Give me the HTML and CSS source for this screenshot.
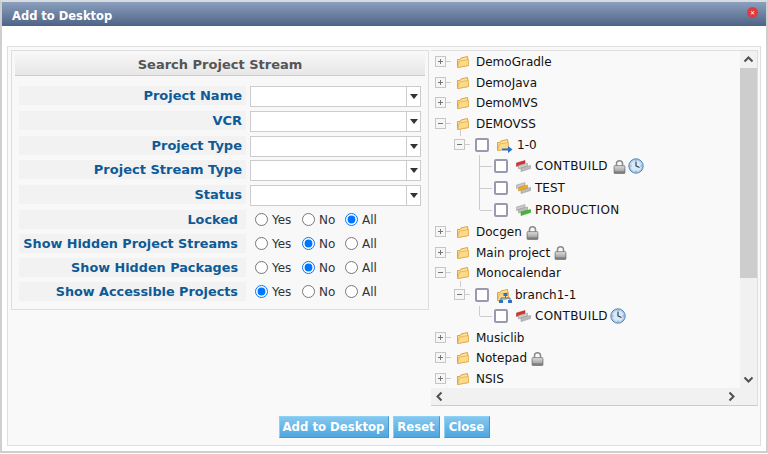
FILE: index.html
```html
<html>
<head>
    <title>Add to Desktop</title>
    <link rel="stylesheet" href="styles.css">
</head>

<body>
    <svg class="defs" width="0" height="0">
        <defs>
            <linearGradient id="folderFill" x1="0" y1="0" x2="0" y2="1">
                <stop offset="0" stop-color="#ffe7a8" />
                <stop offset="1" stop-color="#f7c564" />
            </linearGradient>
            <linearGradient id="lockFill" x1="0" y1="0" x2="0" y2="1">
                <stop offset="0" stop-color="#d8d8d8" />
                <stop offset="1" stop-color="#6f7072" />
            </linearGradient>
            <symbol id="folder" viewBox="0 0 14 14">
                <path d="M1.5 12.5 L1.5 4.5 L4 4.5 L5 3 L11.5 1.5 L12.5 10.5 Z" fill="url(#folderFill)" stroke="#d9a441" />
                <path d="M1.5 12.5 L3.5 6 L12.5 4.5 L12.5 10.5 Z" fill="#fdd98a" stroke="#e0ae50" stroke-width=".7" />
            </symbol>
            <symbol id="plus" viewBox="0 0 21 12">
                <rect x=".5" y=".5" width="10" height="10" fill="#f6f6f6" stroke="#c6c6c6" />
                <path d="M3 5.5 H8 M5.5 3 V8" stroke="#777" />
                <path d="M11 5.5 H16" stroke="#ccc" />
            </symbol>
            <symbol id="minus" viewBox="0 0 21 12">
                <rect x=".5" y=".5" width="10" height="10" fill="#f6f6f6" stroke="#c6c6c6" />
                <path d="M3 5.5 H8" stroke="#777" />
                <path d="M11 5.5 H16" stroke="#ccc" />
            </symbol>
            <symbol id="streamRed" viewBox="0 0 15 12">
                <path d="M.5 6.5 V3 L9 .5 V3.5 Z" fill="#d8322e" stroke="#a82522" stroke-width=".5" />
                <path d="M2.5 9 V5.5 L11.5 3 V6 Z" fill="#c9c9c9" stroke="#929292" stroke-width=".5" />
                <path d="M5 11.5 V8 L14.5 5.5 V8.5 Z" fill="#bdbdbd" stroke="#8c8c8c" stroke-width=".5" />
            </symbol>
            <symbol id="streamAmber" viewBox="0 0 15 12">
                <path d="M.5 6.5 V3 L9 .5 V3.5 Z" fill="#c9c9c9" stroke="#929292" stroke-width=".5" />
                <path d="M2.5 9 V5.5 L11.5 3 V6 Z" fill="#f5a91c" stroke="#c98a12" stroke-width=".5" />
                <path d="M5 11.5 V8 L14.5 5.5 V8.5 Z" fill="#bdbdbd" stroke="#8c8c8c" stroke-width=".5" />
            </symbol>
            <symbol id="streamGreen" viewBox="0 0 15 12">
                <path d="M.5 6.5 V3 L9 .5 V3.5 Z" fill="#c9c9c9" stroke="#929292" stroke-width=".5" />
                <path d="M2.5 9 V5.5 L11.5 3 V6 Z" fill="#bdbdbd" stroke="#8c8c8c" stroke-width=".5" />
                <path d="M5 11.5 V8 L14.5 5.5 V8.5 Z" fill="#3fbb38" stroke="#2c8f28" stroke-width=".5" />
            </symbol>
            <symbol id="lock" viewBox="0 0 13 15">
                <path d="M3.5 7 V4.5 C3.5 .8 9.5 .8 9.5 4.5 V7" fill="none" stroke="#8a8a8a" stroke-width="1.5" />
                <rect x="1" y="6.5" width="11" height="8" rx="1" fill="url(#lockFill)" stroke="#666" stroke-width=".6" />
                <path d="M2 9 H11 M2 11 H11" stroke="#eee" stroke-width=".5" />
            </symbol>
            <symbol id="clock" viewBox="0 0 16 16">
                <circle cx="8" cy="8" r="7.2" fill="#a9d0ee" stroke="#4f86b6" />
                <circle cx="8" cy="8" r="5.4" fill="#d6eaf8" />
                <path d="M8 3.8 V8 L11.5 9.5" fill="none" stroke="#234" stroke-width="1.1" />
                <path d="M8 2.6 V3.4 M8 12.6 V13.4 M2.6 8 H3.4 M12.6 8 H13.4" stroke="#d33" />
            </symbol>
        </defs>
    </svg>

    <div class="window">
        <div class="titleBar">
            <span>Add to Desktop</span>
            <span class="closeIcon">&#10005;</span>
        </div>

        <div class="windowBody">
            <div class="panel">
                <div class="columns">
                    <form class="searchForm">
                        <div class="searchTitle">Search Project Stream</div>

                        <div class="formRow">
                            <label class="fieldLabel">Project Name</label>
                            <div class="combo"><span class="comboArrow"></span></div>
                        </div>
                        <div class="formRow">
                            <label class="fieldLabel">VCR</label>
                            <div class="combo"><span class="comboArrow"></span></div>
                        </div>
                        <div class="formRow">
                            <label class="fieldLabel">Project Type</label>
                            <div class="combo"><span class="comboArrow"></span></div>
                        </div>
                        <div class="formRow">
                            <label class="fieldLabel">Project Stream Type</label>
                            <div class="combo"><span class="comboArrow"></span></div>
                        </div>
                        <div class="formRow">
                            <label class="fieldLabel">Status</label>
                            <div class="combo"><span class="comboArrow"></span></div>
                        </div>

                        <div class="formRow radioRow">
                            <label class="fieldLabel">Locked</label>
                            <div class="radios">
                                <label class="yes"><input type="radio" name="locked">Yes</label>
                                <label class="no"><input type="radio" name="locked">No</label>
                                <label><input type="radio" name="locked" checked>All</label>
                            </div>
                        </div>
                        <div class="formRow radioRow">
                            <label class="fieldLabel">Show Hidden Project Streams</label>
                            <div class="radios">
                                <label class="yes"><input type="radio" name="streams">Yes</label>
                                <label class="no"><input type="radio" name="streams" checked>No</label>
                                <label><input type="radio" name="streams">All</label>
                            </div>
                        </div>
                        <div class="formRow radioRow">
                            <label class="fieldLabel">Show Hidden Packages</label>
                            <div class="radios">
                                <label class="yes"><input type="radio" name="packages">Yes</label>
                                <label class="no"><input type="radio" name="packages" checked>No</label>
                                <label><input type="radio" name="packages">All</label>
                            </div>
                        </div>
                        <div class="formRow radioRow">
                            <label class="fieldLabel">Show Accessible Projects</label>
                            <div class="radios">
                                <label class="yes"><input type="radio" name="accessible" checked>Yes</label>
                                <label class="no"><input type="radio" name="accessible">No</label>
                                <label><input type="radio" name="accessible">All</label>
                            </div>
                        </div>
                    </form>

                    <div class="treeBox">
                        <div class="tree">
                            <div class="node"><svg class="toggle"><use href="#plus" /></svg><svg class="folder"><use href="#folder" /></svg>DemoGradle</div>
                            <div class="node"><svg class="toggle"><use href="#plus" /></svg><svg class="folder"><use href="#folder" /></svg>DemoJava</div>
                            <div class="node"><svg class="toggle"><use href="#plus" /></svg><svg class="folder"><use href="#folder" /></svg>DemoMVS</div>
                            <div class="node"><svg class="toggle"><use href="#minus" /></svg><svg class="folder"><use href="#folder" /></svg>DEMOVSS</div>

                            <div class="node branch">
                                <span class="stub"></span>
                                <svg class="toggle"><use href="#minus" /></svg><span class="check"></span>
                                <svg class="folder"><use href="#folder" /></svg>
                                <svg class="arrowBadge" viewBox="0 0 11 7"><path d="M0 2.5 H6 V0 L10.5 3.5 L6 7 V4.5 H0 Z" fill="#2f73c0" /></svg>
                                <span class="branchName">1-0</span>
                            </div>
                            <div class="node stream">
                                <span class="elbow"></span><span class="check"></span>
                                <svg class="streamIcon"><use href="#streamRed" /></svg>
                                <span class="upper">CONTBUILD</span><svg class="lock"><use href="#lock" /></svg><svg class="clock"><use href="#clock" /></svg>
                            </div>
                            <div class="node stream">
                                <span class="elbow"></span><span class="check"></span>
                                <svg class="streamIcon"><use href="#streamAmber" /></svg>
                                TEST
                            </div>
                            <div class="node stream tail">
                                <span class="elbow last"></span><span class="check"></span>
                                <svg class="streamIcon"><use href="#streamGreen" /></svg>
                                <span class="upper wider">PRODUCTION</span>
                            </div>

                            <div class="node"><svg class="toggle"><use href="#plus" /></svg><svg class="folder"><use href="#folder" /></svg>Docgen<svg class="lock"><use href="#lock" /></svg></div>
                            <div class="node"><svg class="toggle"><use href="#plus" /></svg><svg class="folder"><use href="#folder" /></svg>Main project<svg class="lock"><use href="#lock" /></svg></div>
                            <div class="node"><svg class="toggle"><use href="#minus" /></svg><svg class="folder"><use href="#folder" /></svg>Monocalendar</div>

                            <div class="node branch second">
                                <span class="stub"></span>
                                <svg class="toggle"><use href="#minus" /></svg><span class="check"></span>
                                <svg class="folder"><use href="#folder" /></svg>
                                <svg class="arrowBadge treeBadge" viewBox="0 0 13 10"><path d="M6.5 2 V5 M2 8 V5 H11 V8" fill="none" stroke="#2f73c0" /><rect x="4.5" y="0" width="4" height="3" fill="#2f73c0" /><rect x="0" y="7" width="4" height="3" fill="#2f73c0" /><rect x="9" y="7" width="4" height="3" fill="#2f73c0" /></svg>
                                <span class="branchName wide">branch1-1</span>
                            </div>
                            <div class="node stream">
                                <span class="elbow last"></span><span class="check"></span>
                                <svg class="streamIcon"><use href="#streamRed" /></svg>
                                <span class="upper">CONTBUILD</span><svg class="clock"><use href="#clock" /></svg>
                            </div>

                            <div class="node"><svg class="toggle"><use href="#plus" /></svg><svg class="folder"><use href="#folder" /></svg>Musiclib</div>
                            <div class="node"><svg class="toggle"><use href="#plus" /></svg><svg class="folder"><use href="#folder" /></svg>Notepad<svg class="lock"><use href="#lock" /></svg></div>
                            <div class="node"><svg class="toggle"><use href="#plus" /></svg><svg class="folder"><use href="#folder" /></svg>NSIS</div>
                        </div>

                        <div class="scrollY">
                            <svg class="scrollBtn" viewBox="0 0 17 17"><path d="M4.5 10.5 L8.5 6.5 L12.5 10.5" fill="none" stroke="#505050" stroke-width="2" /></svg>
                            <div class="scrollThumb"></div>
                            <svg class="scrollBtn bottomBtn" viewBox="0 0 17 17"><path d="M4.5 6.5 L8.5 10.5 L12.5 6.5" fill="none" stroke="#505050" stroke-width="2" /></svg>
                        </div>
                        <div class="scrollX">
                            <svg class="scrollBtn" viewBox="0 0 17 17"><path d="M10.5 4.5 L6.5 8.5 L10.5 12.5" fill="none" stroke="#505050" stroke-width="2" /></svg>
                            <svg class="scrollBtn" viewBox="0 0 17 17"><path d="M6.5 4.5 L10.5 8.5 L6.5 12.5" fill="none" stroke="#505050" stroke-width="2" /></svg>
                        </div>
                        <div class="scrollCorner"></div>
                    </div>
                </div>

                <div class="buttons">
                    <input type="button" class="btn addBtn" value="Add to Desktop" />
                    <input type="button" class="btn resetBtn" value="Reset" />
                    <input type="button" class="btn closeBtn" value="Close" />
                </div>
            </div>
        </div>
    </div>
</body>

</html>
```

FILE: styles.css
```css
html, body {
    margin: 0;
    padding: 0;
    background-color: #fff;
}

body {
    font-family: "DejaVu Sans", Verdana, sans-serif;
    font-size: 12px;
}

.defs {
    position: absolute;
}

.window {
    box-sizing: border-box;
    width: 768px;
    height: 453px;
    border: 2px solid #cfcfcf;
    border-top-color: #d8dbe0;
    display: flex;
    flex-direction: column;
    overflow: hidden;
}

.titleBar {
    box-sizing: border-box;
    flex: none;
    height: 24px;
    padding: 3px 8px 0 10px;
    display: flex;
    align-items: center;
    justify-content: space-between;
    background: linear-gradient(#8ba0bd, #4e6486);
    color: #fff;
    font-size: 11.5px;
    font-weight: bold;
}

.closeIcon {
    width: 11px;
    height: 11px;
    margin-top: -6px;
    border-radius: 50%;
    background-color: #e0393e;
    color: #fff;
    font-size: 6px;
    line-height: 11px;
    text-align: center;
}

.windowBody {
    flex: 1;
    padding: 20px 5px 5px 5px;
    min-height: 0;
}

.panel {
    box-sizing: border-box;
    height: 400px;
    border: 1px solid #dedede;
    background-color: #f9f9f9;
    padding: 3px;
}

.columns {
    display: flex;
    align-items: flex-start;
    gap: 2px;
}

.searchForm {
    box-sizing: border-box;
    width: 418px;
    height: 260px;
    flex: none;
    padding: 3px;
    border: 1px solid #dedede;
    background-color: #f8f8f8;
}

.searchTitle {
    height: 21px;
    margin-bottom: 10px;
    border-bottom: 1px solid #ccc;
    background: linear-gradient(#f6f6f6, #e7e7e7);
    color: #555;
    font-size: 13px;
    font-weight: bold;
    line-height: 21px;
    text-align: center;
}

.formRow {
    display: flex;
    align-items: flex-start;
    gap: 4px;
    height: 24.75px;
    padding-left: 4px;
}

.fieldLabel {
    box-sizing: border-box;
    width: 227px;
    height: 19px;
    padding-right: 4px;
    background-color: #f2f2f2;
    color: #0e5a96;
    font-size: 13px;
    font-weight: bold;
    line-height: 19px;
    text-align: right;
    white-space: nowrap;
}

.radioRow {
    height: 24px;
}

.radioRow .fieldLabel {
    padding-right: 8px;
    font-size: 12.8px;
}

.combo {
    box-sizing: border-box;
    width: 171px;
    height: 21px;
    display: flex;
    justify-content: flex-end;
    border: 1px solid #ccc;
    background-color: #fff;
}

.comboArrow {
    width: 13px;
    border-left: 1px solid #ccc;
    position: relative;
}

.comboArrow:after {
    content: "";
    position: absolute;
    top: 7px;
    left: 3px;
    border: 4px solid transparent;
    border-top: 5px solid #333;
    border-bottom: 0;
}

.radios {
    display: flex;
    align-items: center;
    height: 20px;
    padding-left: 5px;
    color: #333;
}

.radios label {
    display: flex;
    align-items: center;
    gap: 4px;
}

.radios input {
    width: 13px;
    height: 13px;
    margin: 0;
}

.radios .yes {
    width: 47px;
}

.radios .no {
    width: 43px;
}

.treeBox {
    box-sizing: border-box;
    width: 327px;
    height: 356px;
    flex: none;
    display: grid;
    grid-template-columns: 1fr 17px;
    grid-template-rows: 1fr 17px;
    border-top: 1px solid #dedede;
    border-right: 1px solid #dedede;
    border-bottom: 1px solid #ccc;
    overflow: hidden;
}

.tree {
    box-sizing: border-box;
    height: 337px;
    padding: 1px 0 0 4px;
    overflow: hidden;
    color: #111;
}

.node {
    height: 20.6px;
    display: flex;
    align-items: center;
    white-space: nowrap;
}

.toggle {
    width: 21px;
    height: 12px;
    flex: none;
}

.folder {
    width: 14px;
    height: 14px;
    flex: none;
    margin-right: 6px;
}

.node .lock {
    width: 13px;
    height: 15px;
    margin-left: 4px;
    flex: none;
}

.stream .lock {
    margin-left: 5px;
}

.node .clock {
    width: 16px;
    height: 16px;
    margin-left: 2px;
    flex: none;
}

.branch {
    height: 21px;
    padding-left: 19px;
    position: relative;
}

.branch.second {
    margin-top: 1px;
}

.stub {
    position: absolute;
    left: 25px;
    top: -4px;
    height: 6px;
    border-left: 1px solid #ccc;
}

.branch .toggle {
    width: 21px;
}

.check {
    box-sizing: border-box;
    width: 14px;
    height: 14px;
    flex: none;
    border: 2px solid #9a9aae;
    border-radius: 2px;
    background-color: #fff;
}

.branch .folder {
    margin-left: 7px;
    margin-right: 0;
}

.arrowBadge {
    width: 11px;
    height: 7px;
    flex: none;
    margin: 9px 0 0 -8px;
}

.treeBadge {
    width: 13px;
    height: 10px;
    margin: 6px 0 0 -11px;
}

.branchName {
    margin-left: 4px;
}

.branchName.wide {
    margin-left: 3px;
}

.stream {
    height: 21.8px;
    padding-left: 44px;
    position: relative;
}

.tail {
    margin-bottom: 1px;
}

.upper {
    letter-spacing: .25px;
}

.upper.wider {
    letter-spacing: .4px;
}

.elbow {
    position: absolute;
    left: 44px;
    top: 0;
    bottom: 0;
    width: 12px;
    border-left: 1px solid #ccc;
}

.elbow:after {
    content: "";
    position: absolute;
    left: 0;
    top: 50%;
    width: 12px;
    border-top: 1px solid #ccc;
}

.elbow.last {
    bottom: 50%;
}

.elbow.last:after {
    top: 100%;
}

.stream .check {
    margin-left: 15px;
}

.streamIcon {
    width: 15px;
    height: 12px;
    flex: none;
    margin: 0 4px 0 8px;
}

.scrollY {
    display: flex;
    flex-direction: column;
    background-color: #f1f1f1;
}

.scrollBtn {
    width: 17px;
    height: 17px;
    flex: none;
}

.scrollThumb {
    height: 210px;
    background-color: #cdcdcd;
}

.bottomBtn {
    margin-top: auto;
}

.scrollX {
    display: flex;
    justify-content: space-between;
    background-color: #f1f1f1;
}

.scrollCorner {
    background-color: #f1f1f1;
}

.buttons {
    display: flex;
    justify-content: center;
    gap: 4px;
    margin-top: 10px;
}

.btn {
    height: 22px;
    padding: 0;
    border: 1px solid #3f9ad6;
    border-top-color: #8fd0f5;
    border-left-color: #8fd0f5;
    background: linear-gradient(#84c8f0, #4da6de);
    color: #fff;
    font-family: "DejaVu Sans", Verdana, sans-serif;
    font-size: 11.7px;
    font-weight: bold;
    cursor: pointer;
}

.addBtn {
    width: 110px;
}

.resetBtn {
    width: 47px;
}

.closeBtn {
    width: 46px;
}
```
